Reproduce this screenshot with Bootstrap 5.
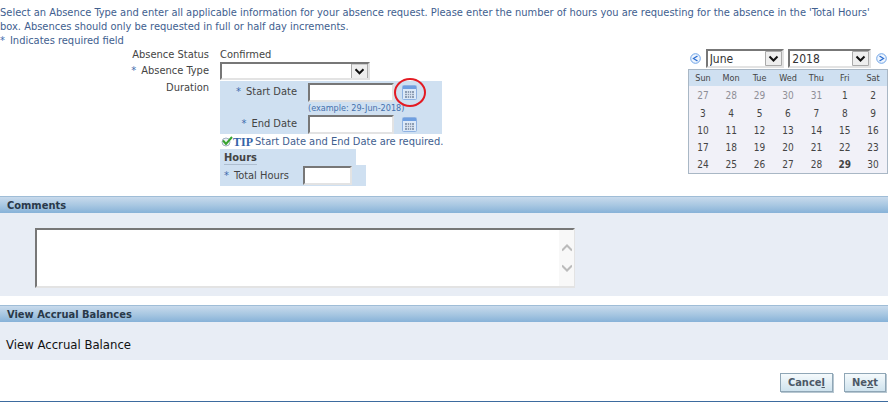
<!DOCTYPE html>
<html lang="en">
<head>
<meta charset="utf-8">
<meta name="viewport" content="width=device-width, initial-scale=1">
<title>Absence Request</title>
<link href="https://cdn.jsdelivr.net/npm/bootstrap@5.3.0/dist/css/bootstrap.min.css" rel="stylesheet">
<style>
body { font: 11px/14px "DejaVu Sans Condensed", "DejaVu Sans", sans-serif; color: #444; background: #fff; }
.page { padding: 6px 4px 0 0; }
.foot-rule { margin: 0; border: 0; border-top: 1px solid #3d6b9f; opacity: 1; }
.info { color: #41608f; }
.star { color: #3e6cac; margin-right: 5px; }
.absence-form { padding-bottom: 10px; }
.field-label { width: 209px; text-align: right; flex: none; }
.field-row { display: flex; gap: 11px; }
.duration { padding-top: 1px; }
.box { border: 2px solid; border-color: #777 #e3e3e3 #e3e3e3 #777; border-radius: 0; background-color: #fff; color: #333; padding: 0 4px; height: 19px; font-size: 12px; line-height: 14px; }
select.box { appearance: none; padding: 0 20px 0 2px;
  background: url("data:image/svg+xml,%3Csvg xmlns='http://www.w3.org/2000/svg' width='17' height='15'%3E%3Cpath d='M.5.5h16v14H.5z' fill='%23eee' stroke='%23aaa'/%3E%3Cpath d='M4.500 5.500l4 4 4-4' fill='none' stroke='%23111' stroke-width='2'/%3E%3C/svg%3E") right center no-repeat #fff; }
.type-select { width: 150px; height: 18px; }
.dates { background: #cfe0f1; width: 222px; padding-top: 1px; }
.date-row { display: flex; align-items: center; height: 20px; }
.date-label { width: 77px; margin-right: 11px; text-align: right; white-space: nowrap; }
.date-input { width: 86px; }
.example { font-size: 9px; line-height: 12px; padding-left: 88px; color: #4470ad; white-space: nowrap; }
.icon-btn { border: 0; background: none; padding: 0; line-height: 0; }
.pick { margin-left: 8px; }
.ring { position: absolute; left: -8px; top: -7px; width: 32px; height: 29px; border: 2px solid #e31b23; border-radius: 50%; pointer-events: none; }
.tip { height: 15px; white-space: nowrap; gap: 2px; }
.tip svg { margin-right: -2px; }
.tip b { font-family: "Liberation Serif", serif; font-size: 12px; color: #3564a8; }
.hours-head { background: #cfe0f1; width: 136px; height: 16px; padding: 2px 4px 0; }
.hours-head span { font-weight: 700; border-bottom: 1px solid #aebed0; display: inline-block; line-height: 13px; }
.hours-row { background: #cfe0f1; width: 146px; height: 21px; padding-left: 4px; display: flex; align-items: center; gap: 14px; white-space: nowrap; }
.hours-input { width: 49px; }
.cal { width: 200px; }
.month-select { width: 78px; }
.year-select { width: 83px; }
.cal-nav { height: 21px; padding: 0 1px 0 2px; }
.cal-grid { width: 100%; table-layout: fixed; border: 1px solid #a9b7c5; background: #f1f1f8; text-align: center; font-size: 10px; line-height: 17px; color: #444; }
.cal-grid th { background: #cfe0f1; font-weight: 400; font-size: 9px; line-height: 16px; text-align: center; }
.cal-grid td, .cal-grid th { padding: 0; }
.cal-grid tbody tr:first-child td { line-height: 19px; }
.cal-grid .other { color: #8f8f97; }
.bar { height: 17px; padding: 1px 7px 0; margin: 0; font-size: 11px; line-height: 16px; font-weight: 700; color: #29394a; background: linear-gradient(#c8daec, #a9c8e2 50%, #87b2d8); border-top: 1px solid #9fbdd7; }
.panel { background: #e8edf5; }
.comments { padding: 15px 0 8px 35px; margin-bottom: 9px; }
.comments-box { width: 540px; max-width: 100%; }
.comments-box textarea { display: block; width: 100%; height: 60px; resize: none; padding: 2px 24px 2px 4px; overflow: hidden; }
.scroller { position: absolute; top: 2px; right: 1px; bottom: 2px; width: 15px; background: #f8f8f8; }
.accrual { padding: 16px 6px 8px; margin-bottom: 13px; font-size: 13px; color: #111; }
.act { height: 19px; padding: 0 7px; border: 1px solid #8fa6b6; border-radius: 0; font: 700 11px/16px "DejaVu Sans Condensed", "DejaVu Sans", sans-serif; color: #4c5967; background: linear-gradient(#f5fafc, #cfe3ee); box-shadow: 1px 1px 0 #b7c7d1; }
.actions { gap: 11px; padding: 0 2px 9px 0; }
</style>
</head>
<body>
<main class="page">
  <div class="info">
    <p class="m-0">Select an Absence Type and enter all applicable information for your absence request. Please enter the number of hours you are requesting for the absence in the 'Total Hours' box. Absences should only be requested in full or half day increments.</p>
    <p class="m-0"><span class="star">*</span>Indicates required field</p>
  </div>
  <form>
    <div class="absence-form d-flex justify-content-between align-items-start">
      <div>
        <div class="field-row"><span class="field-label">Absence Status</span><span>Confirmed</span></div>
        <div class="field-row align-items-center">
          <label class="field-label" for="type"><span class="star">*</span>Absence Type</label>
          <select class="box type-select" id="type"><option></option></select>
        </div>
        <div class="field-row duration">
          <span class="field-label">Duration</span>
          <div>
            <div class="dates">
              <div class="date-row">
                <label class="date-label" for="start"><span class="star">*</span>Start Date</label>
                <input class="box date-input" id="start" type="text">
                <button class="icon-btn pick position-relative" type="button" aria-label="Pick start date">
                  <svg width="15" height="15" viewBox="0 0 15 15"><rect x=".5" y=".5" width="14" height="14" rx="1" fill="#dce9f8" stroke="#8fb2e2"/><path d="M1 1h13v3H1z" fill="#6f9fe0"/><path d="M3 6h9v7H3z" fill="#8d9db3"/><path d="M3 8.500h9M3 10.500h9M5.500 6v7M7.500 6v7M9.500 6v7" stroke="#dce6f2" stroke-width=".8"/></svg>
                  <span class="ring"></span>
                </button>
              </div>
              <div class="example">(example: 29-Jun-2018)</div>
              <div class="date-row">
                <label class="date-label" for="end"><span class="star">*</span>End Date</label>
                <input class="box date-input" id="end" type="text">
                <button class="icon-btn pick" type="button" aria-label="Pick end date">
                  <svg width="15" height="15" viewBox="0 0 15 15"><rect x=".5" y=".5" width="14" height="14" rx="1" fill="#dce9f8" stroke="#8fb2e2"/><path d="M1 1h13v3H1z" fill="#6f9fe0"/><path d="M3 6h9v7H3z" fill="#8d9db3"/><path d="M3 8.500h9M3 10.500h9M5.500 6v7M7.500 6v7M9.500 6v7" stroke="#dce6f2" stroke-width=".8"/></svg>
                </button>
              </div>
            </div>
            <div class="tip info d-flex align-items-center"><svg width="13" height="11" viewBox="0 0 13 11"><circle cx="6" cy="6" r="4" fill="#eef3f7" stroke="#9fb0bf"/><path d="M3 4.500l3 3.500 6-7" fill="none" stroke="#38a32f" stroke-width="2"/></svg><b>TIP</b><span>Start Date and End Date are required.</span></div>
            <div class="hours-head"><span>Hours</span></div>
            <div class="hours-row">
              <label for="hours"><span class="star">*</span>Total Hours</label>
              <input class="box hours-input" id="hours" type="text">
            </div>
          </div>
        </div>
      </div>
      <div class="cal">
        <div class="cal-nav d-flex align-items-center justify-content-between">
          <button class="icon-btn" type="button" aria-label="Previous month"><svg width="11" height="11" viewBox="0 0 11 11"><circle cx="5.500" cy="5.500" r="4.800" fill="#eef5fe" stroke="#6ea3e6"/><path d="M7.500 3L3.500 5.500l4 2.500" fill="none" stroke="#2e6fd0" stroke-width="1.300"/></svg></button>
          <select class="box month-select" aria-label="Month"><option>June</option></select>
          <select class="box year-select" aria-label="Year"><option>2018</option></select>
          <button class="icon-btn" type="button" aria-label="Next month"><svg width="11" height="11" viewBox="0 0 11 11"><circle cx="5.500" cy="5.500" r="4.800" fill="#eef5fe" stroke="#6ea3e6"/><path d="M3.500 3l4 2.500-4 2.500" fill="none" stroke="#2e6fd0" stroke-width="1.300"/></svg></button>
        </div>
        <table class="cal-grid">
          <thead><tr><th>Sun</th><th>Mon</th><th>Tue</th><th>Wed</th><th>Thu</th><th>Fri</th><th>Sat</th></tr></thead>
          <tbody>
            <tr><td class="other">27</td><td class="other">28</td><td class="other">29</td><td class="other">30</td><td class="other">31</td><td>1</td><td>2</td></tr>
            <tr><td>3</td><td>4</td><td>5</td><td>6</td><td>7</td><td>8</td><td>9</td></tr>
            <tr><td>10</td><td>11</td><td>12</td><td>13</td><td>14</td><td>15</td><td>16</td></tr>
            <tr><td>17</td><td>18</td><td>19</td><td>20</td><td>21</td><td>22</td><td>23</td></tr>
            <tr><td>24</td><td>25</td><td>26</td><td>27</td><td>28</td><td><b>29</b></td><td>30</td></tr>
          </tbody>
        </table>
      </div>
    </div>
    <h2 class="bar"><label for="comments">Comments</label></h2>
    <div class="panel comments">
      <div class="comments-box position-relative">
        <textarea class="box" id="comments"></textarea>
        <div class="scroller d-flex flex-column align-items-center justify-content-center gap-2">
          <svg width="10" height="12" viewBox="0 0 10 12"><path d="M0 8.500l5-5 5 5" fill="none" stroke="#bbb" stroke-width="2"/></svg>
          <svg width="10" height="12" viewBox="0 0 10 12"><path d="M0 3.500l5 5 5-5" fill="none" stroke="#bbb" stroke-width="2"/></svg>
        </div>
      </div>
    </div>
    <h2 class="bar">View Accrual Balances</h2>
    <div class="panel accrual">View Accrual Balance</div>
    <div class="d-flex justify-content-end actions">
      <button class="act" type="button">Cance<u>l</u></button>
      <button class="act" type="submit">Ne<u>x</u>t</button>
    </div>
  </form>
  <hr class="foot-rule">
</main>
<script src="https://cdn.jsdelivr.net/npm/bootstrap@5.3.0/dist/js/bootstrap.bundle.min.js"></script>
</body>
</html>
